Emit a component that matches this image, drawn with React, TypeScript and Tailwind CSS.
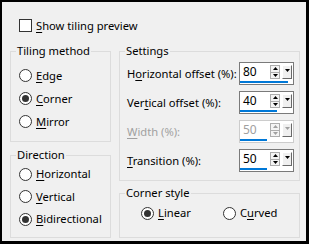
import React from 'react';

const font = { fontFamily: '"Noto Sans", "Open Sans", sans-serif' };

function Key({ children }: { children: React.ReactNode }) {
  return <span className="underline underline-offset-[2px] decoration-1">{children}</span>;
}

function Radio({ checked }: { checked?: boolean }) {
  return (
    <span className="w-[13px] h-[13px] rounded-full border border-[#333333] bg-white flex items-center justify-center shrink-0">
      {checked && <span className="w-[7px] h-[7px] rounded-full bg-[#333333]" />}
    </span>
  );
}

function RadioRow({ checked, pre, k, post, h = 'h-[23px]' }: { checked?: boolean; pre?: string; k: string; post: string; h?: string }) {
  return (
    <div className={`flex items-center gap-[4px] ${h}`}>
      <Radio checked={checked} />
      <span className="leading-none whitespace-nowrap">
        {pre}
        <Key>{k}</Key>
        {post}
      </span>
    </div>
  );
}

function SpinBox({ value, bar, disabled }: { value: string; bar: number; disabled?: boolean }) {
  const arrow = disabled ? '#a0a0a0' : '#000000';
  return (
    <div className={`w-[55px] h-[23px] border bg-white flex flex-col shrink-0 ${disabled ? 'border-[#cccccc]' : 'border-[#7a7a7a]'}`}>
      <div className="flex items-center h-[14px] mt-[2px]">
        <span className={`w-[30px] pl-[3px] leading-none text-[12px] ${disabled ? 'text-[#a0a0a0]' : 'text-black'}`}>{value}</span>
        <div className="w-[10px] h-[14px] border border-[#adadad] bg-[#f4f4f4] flex flex-col">
          <div className="flex-1 flex items-center justify-center border-b border-[#adadad]">
            <svg width="5" height="3" viewBox="0 0 5 3"><path d="M2.5 0 L5 3 L0 3 Z" fill={arrow} /></svg>
          </div>
          <div className="flex-1 flex items-center justify-center">
            <svg width="5" height="3" viewBox="0 0 5 3"><path d="M0 0 L5 0 L2.5 3 Z" fill={arrow} /></svg>
          </div>
        </div>
        <div className="ml-[2px] w-[10px] h-[14px] bg-[#f0f0f0] border-t border-l border-white border-r border-b border-r-[#696969] border-b-[#696969] flex justify-center pt-[3px]">
          <svg width="5" height="3" viewBox="0 0 5 3"><path d="M0 0 L5 0 L2.5 3 Z" fill={arrow} /></svg>
        </div>
      </div>
      <div className="mt-[2px] h-[2px] bg-[#0078d7]" style={{ width: bar }} />
    </div>
  );
}

function Group({ title, className, children }: { title: string; className?: string; children: React.ReactNode }) {
  return (
    <fieldset className={`border border-[#dcdcdc] ${className ?? ''}`}>
      <legend className="ml-[5px] px-[1px] h-[16px] leading-[16px] whitespace-nowrap">{title}</legend>
      {children}
    </fieldset>
  );
}

function SettingRow({ pre, k, post, value, bar, disabled }: { pre?: string; k: string; post: string; value: string; bar: number; disabled?: boolean }) {
  return (
    <div className="flex items-center h-[29px]">
      <span className={`w-[112px] leading-none whitespace-nowrap ${disabled ? 'text-[#a0a0a0]' : ''}`}>
        {pre}
        <Key>{k}</Key>
        {post}
      </span>
      <SpinBox value={value} bar={bar} disabled={disabled} />
    </div>
  );
}

export default function App() {
  return (
    <div
      className="w-[309px] h-[244px] bg-[#f0f0f0] border-l-2 border-t-2 border-r-[3px] border-b-[3px] border-black text-[11.2px] text-black overflow-hidden"
      style={font}
    >
      {/* checkbox */}
      <div className="flex items-center gap-[4px] mt-[17px] ml-[17px] h-[13px]">
        <span className="w-[13px] h-[13px] border border-[#333333] bg-white shrink-0" />
        <span className="leading-none">
          <Key>S</Key>how tiling preview
        </span>
      </div>

      <div className="flex gap-[8px] ml-[8px] mt-[11px]">
        {/* left column */}
        <div className="w-[101px] flex flex-col gap-[5px]">
          <Group title="Tiling method" className="h-[99px]">
            <div className="pl-[8px] pt-[5px]">
              <RadioRow k="E" post="dge" />
              <RadioRow checked k="C" post="orner" />
              <RadioRow k="M" post="irror" />
            </div>
          </Group>
          <Group title="Direction" className="h-[91px]">
            <div className="pl-[8px]">
              <RadioRow k="H" post="orizontal" h="h-[22px]" />
              <RadioRow k="V" post="ertical" h="h-[23px]" />
              <RadioRow checked k="B" post="idirectional" h="h-[22px]" />
            </div>
          </Group>
        </div>

        {/* right column */}
        <div className="w-[181px] flex flex-col gap-[4px]">
          <Group title="Settings" className="h-[138px]">
            <div className="pl-[7px]">
              <SettingRow pre="H" k="o" post="rizontal offset (%):" value="80" bar={48} />
              <SettingRow pre="Ver" k="t" post="ical offset (%):" value="40" bar={37} />
              <SettingRow k="W" post="idth (%):" value="50" bar={27} disabled />
              <SettingRow k="T" post="ransition (%):" value="50" bar={27} />
            </div>
          </Group>
          <Group title="Corner style" className="h-[53px]">
            <div className="flex items-center h-[22px] pt-[2px] pl-[21px]">
              <RadioRow checked k="L" post="inear" h="h-[22px]" />
              <div className="ml-[32px]">
                <RadioRow pre="C" k="u" post="rved" h="h-[22px]" />
              </div>
            </div>
          </Group>
        </div>
      </div>
    </div>
  );
}
